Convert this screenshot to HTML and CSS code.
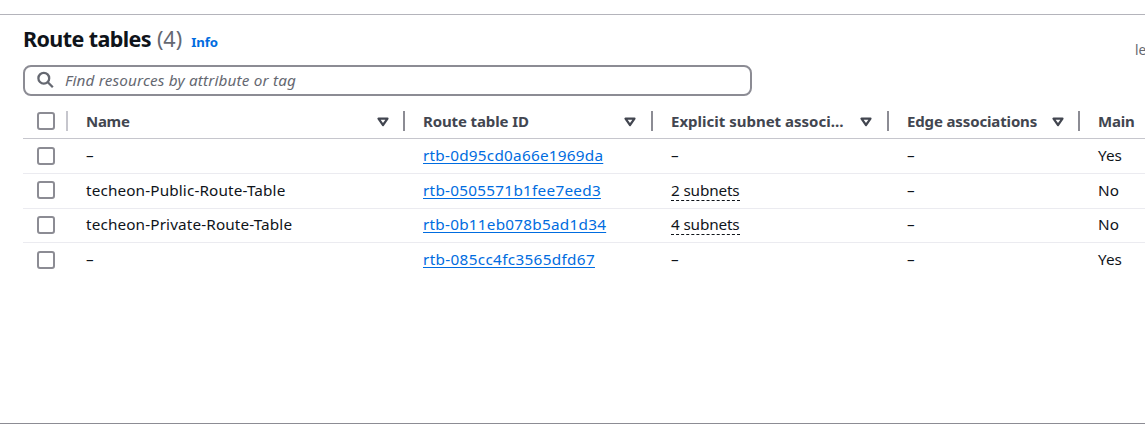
FILE: index.html
```html
<!DOCTYPE html>
<html lang="en">
<head>
<meta charset="utf-8">
<title>Route tables</title>
<link rel="stylesheet" href="styles.css">
</head>
<body>
<svg width="0" height="0" class="defs"><symbol id="sort" viewBox="0 0 12 10"><path d="M1.5 1.6h9L6 8z" fill="none" stroke="currentColor" stroke-width="2.2" stroke-linejoin="round"/></symbol></svg>
<main class="panel">
  <header class="panel-header">
    <h1 class="title"><span class="title-text">Route tables</span><span class="count">(4)</span></h1>
    <a class="info">Info</a>
    <span class="updated">le</span>
  </header>
  <div class="search">
    <svg class="search-icon" viewBox="0 0 18 18"><circle cx="6.8" cy="7.2" r="5.4"/><path d="M10.8 11.2l5 5"/></svg>
    <span class="placeholder">Find resources by attribute or tag</span>
  </div>
  <div class="table">
    <div class="row head">
      <div class="cell check light"><i class="box"></i></div>
      <div class="cell"><span class="h-name">Name</span><svg class="sort wide"><use href="#sort"/></svg></div>
      <div class="cell"><span class="h-id">Route table ID</span><svg class="sort"><use href="#sort"/></svg></div>
      <div class="cell"><span class="h-explicit">Explicit subnet associ…</span><svg class="sort"><use href="#sort"/></svg></div>
      <div class="cell"><span class="h-edge">Edge associations</span><svg class="sort wide"><use href="#sort"/></svg></div>
      <div class="cell last"><span class="h-main">Main</span></div>
    </div>
    <div class="row first">
      <div class="cell check"><i class="box"></i></div>
      <div class="cell">–</div>
      <div class="cell"><a class="link id1">rtb-0d95cd0a66e1969da</a></div>
      <div class="cell">–</div>
      <div class="cell">–</div>
      <div class="cell">Yes</div>
    </div>
    <div class="row">
      <div class="cell check"><i class="box"></i></div>
      <div class="cell"><span class="name">techeon-Public-Route-Table</span></div>
      <div class="cell"><a class="link id2">rtb-0505571b1fee7eed3</a></div>
      <div class="cell linked"><span class="subnets">2 subnets</span></div>
      <div class="cell">–</div>
      <div class="cell">No</div>
    </div>
    <div class="row short">
      <div class="cell check"><i class="box"></i></div>
      <div class="cell"><span class="name">techeon-Private-Route-Table</span></div>
      <div class="cell"><a class="link id3">rtb-0b11eb078b5ad1d34</a></div>
      <div class="cell linked"><span class="subnets">4 subnets</span></div>
      <div class="cell">–</div>
      <div class="cell">No</div>
    </div>
    <div class="row final">
      <div class="cell check"><i class="box"></i></div>
      <div class="cell">–</div>
      <div class="cell"><a class="link id4">rtb-085cc4fc3565dfd67</a></div>
      <div class="cell">–</div>
      <div class="cell">–</div>
      <div class="cell">Yes</div>
    </div>
  </div>
</main>
</body>
</html>
```

FILE: styles.css
```css
* { box-sizing: border-box; }
body { margin: 0; padding-top: 14px; height: 424px; overflow: hidden; background: #fff; color: #0f141a; font: 15.3px/20px "Noto Sans", "Open Sans", sans-serif; }
.defs { display: none; }
.panel { height: 410px; border-top: 1px solid #b4b4bb; border-bottom: 1px solid #8c8c94; padding-left: 23px; }
.panel-header { display: flex; height: 50px; padding-top: 10px; white-space: nowrap; }
.title { margin: 0; display: flex; gap: 6px; font-size: 21.5px; line-height: 28px; letter-spacing: -0.6px; }
.count { color: #656871; font-weight: 400; letter-spacing: 0; }
.info { margin-left: 9px; padding-top: 7px; color: #006ce0; font-size: 13.2px; font-weight: 700; letter-spacing: -0.1px; }
.updated { margin-left: auto; width: 10px; padding-top: 15px; overflow: hidden; color: #656871; font-size: 13.5px; }
.search { display: flex; align-items: center; width: 729px; height: 31px; padding: 0 0 2px 12px; border: 2px solid #8c8c94; border-radius: 8px; color: #656871; font-style: italic; }
.search-icon { width: 18px; height: 18px; margin-right: 10px; fill: none; stroke: #656871; stroke-width: 2.3; }
.placeholder { letter-spacing: 0.16px; }
.table { margin-top: 9px; }
.row { display: grid; grid-template-columns: 45px 337px 248px 236px 191px 65px; height: 35px; border-bottom: 1px solid #ebebf0; white-space: nowrap; }
.row.short { height: 34px; }
.row.final { height: 35px; border-bottom-color: transparent; }
.row.head { height: 34px; border-bottom-color: #c6c6cd; color: #424650; font-size: 15px; font-weight: 700; }
.cell { display: flex; align-items: center; padding: 0 0 2px 18px; min-width: 0; }
.short .cell { padding-bottom: 3px; }
.cell.linked { padding-bottom: 0; }
.short .cell.linked { padding-bottom: 1px; }
.first .cell.check, .final .cell.check { padding-bottom: 0; }
.cell.check { padding-left: 14px; }
.short .cell.check { padding-bottom: 1px; }
.box { width: 18px; height: 18px; border: 2px solid #8c8c94; border-radius: 3px; }
.head .cell::after { content: ""; width: 2px; height: 20px; background: #8c8c94; }
.head .cell { padding-bottom: 1px; }
.head .check { justify-content: space-between; }
.head .light::after { background: #c6c6cd; }
.head .last::after { display: none; }
.h-name { letter-spacing: -0.3px; }
.h-id { letter-spacing: -0.12px; }
.h-edge { letter-spacing: -0.14px; }
.h-main { letter-spacing: -0.2px; }
.sort { width: 12px; height: 10px; margin: 1px 15px 0 auto; }
.sort.wide { margin-right: 14px; }
.name { letter-spacing: 0.13px; }
.link { color: #006ce0; text-decoration: underline; text-underline-offset: 2px; text-decoration-thickness: 1px; }
.id1 { letter-spacing: 0.25px; }
.id2 { letter-spacing: 0.27px; }
.id3 { letter-spacing: 0.25px; }
.id4 { letter-spacing: 0.33px; }
.subnets { line-height: 19px; border-bottom: 1px dashed #0f141a; letter-spacing: -0.15px; }
```
